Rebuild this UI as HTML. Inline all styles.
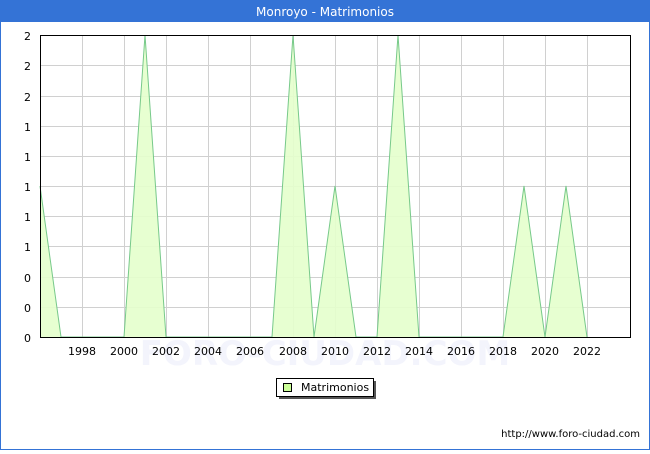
<!DOCTYPE html>
<html><head><style>
body{margin:0;width:650px;height:450px;overflow:hidden;background:#fff;font-family:"DejaVu Sans","Liberation Sans",sans-serif;}
</style></head><body>
<svg width="650" height="450" xmlns="http://www.w3.org/2000/svg" font-family="DejaVu Sans, Liberation Sans, sans-serif">
<rect x="0.5" y="0.5" width="649" height="449" fill="#fff" stroke="#3473d6"/>
<rect x="0" y="0" width="650" height="22" fill="#3473d6"/>
<text x="325" y="16" text-anchor="middle" font-size="12" fill="#fff">Monroyo - Matrimonios</text>
<text x="325" y="365" text-anchor="middle" font-size="34" fill="#f3f4fc" font-weight="bold">FORO-CIUDAD.COM</text>
<g stroke="#d0d0d0" stroke-width="1">
<line x1="82.5" y1="35" x2="82.5" y2="337"/><line x1="124.5" y1="35" x2="124.5" y2="337"/><line x1="166.5" y1="35" x2="166.5" y2="337"/><line x1="208.5" y1="35" x2="208.5" y2="337"/><line x1="250.5" y1="35" x2="250.5" y2="337"/><line x1="293.5" y1="35" x2="293.5" y2="337"/><line x1="335.5" y1="35" x2="335.5" y2="337"/><line x1="377.5" y1="35" x2="377.5" y2="337"/><line x1="419.5" y1="35" x2="419.5" y2="337"/><line x1="461.5" y1="35" x2="461.5" y2="337"/><line x1="503.5" y1="35" x2="503.5" y2="337"/><line x1="545.5" y1="35" x2="545.5" y2="337"/><line x1="587.5" y1="35" x2="587.5" y2="337"/>
<line x1="40" y1="65.5" x2="630" y2="65.5"/><line x1="40" y1="96.5" x2="630" y2="96.5"/><line x1="40" y1="126.5" x2="630" y2="126.5"/><line x1="40" y1="156.5" x2="630" y2="156.5"/><line x1="40" y1="186.5" x2="630" y2="186.5"/><line x1="40" y1="216.5" x2="630" y2="216.5"/><line x1="40" y1="246.5" x2="630" y2="246.5"/><line x1="40" y1="277.5" x2="630" y2="277.5"/><line x1="40" y1="307.5" x2="630" y2="307.5"/>
</g>
<polygon fill="#e4ffcc" fill-opacity="0.9" stroke="none" points="40,337 40,186 61,337 124,337 145,35 166,337 272,337 293,35 314,337 335,186 356,337 377,337 398,35 419,337 503,337 524,186 545,337 566,186 587,337"/>
<polyline fill="none" stroke="#77c98a" stroke-width="1" points="40,186 61,337 124,337 145,35 166,337 272,337 293,35 314,337 335,186 356,337 377,337 398,35 419,337 503,337 524,186 545,337 566,186 587,337"/>
<rect x="40.5" y="35.5" width="590" height="302" fill="none" stroke="#000"/>
<g font-size="11" fill="#000" text-anchor="end">
<text x="31" y="40">2</text><text x="31" y="70">2</text><text x="31" y="101">2</text><text x="31" y="131">1</text><text x="31" y="161">1</text><text x="31" y="191">1</text><text x="31" y="221">1</text><text x="31" y="251">1</text><text x="31" y="282">0</text><text x="31" y="312">0</text><text x="31" y="342">0</text>
</g>
<g font-size="11" fill="#000" text-anchor="middle">
<text x="82" y="355">1998</text><text x="124" y="355">2000</text><text x="166" y="355">2002</text><text x="208" y="355">2004</text><text x="250" y="355">2006</text><text x="293" y="355">2008</text><text x="335" y="355">2010</text><text x="377" y="355">2012</text><text x="419" y="355">2014</text><text x="461" y="355">2016</text><text x="503" y="355">2018</text><text x="545" y="355">2020</text><text x="587" y="355">2022</text>
</g>
<rect x="279" y="381" width="97" height="18" fill="#555"/>
<rect x="276.5" y="378.5" width="97" height="18" fill="#fff" stroke="#000"/>
<rect x="283.5" y="383.5" width="8" height="8" fill="#ccff99" stroke="#000"/>
<text x="301" y="391" font-size="11">Matrimonios</text>
<text x="640" y="437" text-anchor="end" font-size="10">http://www.foro-ciudad.com</text>
</svg>
</body></html>
